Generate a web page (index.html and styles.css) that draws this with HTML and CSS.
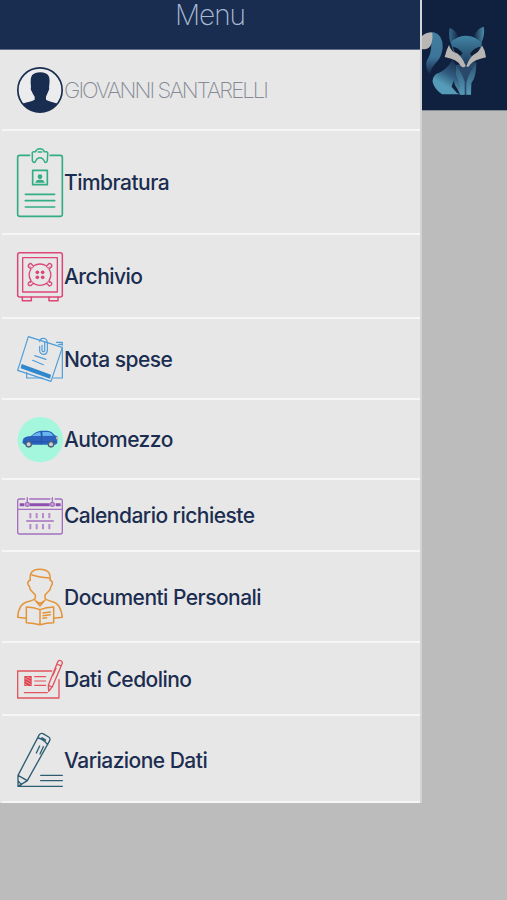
FILE: index.html
```
<!DOCTYPE html>
<html lang="it">
<head>
<meta charset="utf-8">
<title>Menu</title>
<link rel="stylesheet" href="styles.css">
</head>
<body>
<div class="app">
<aside class="drawer">
<header class="drawer-head"><h1>Menu</h1></header>
<nav>
<a class="row r-user"><svg width="48" height="79" viewBox="48 150 144 237"><defs><clipPath id="disc"><circle cx="120" cy="270" r="66"/></clipPath></defs><circle cx="120" cy="270" r="66.500" fill="#ececee" stroke="#182d4f" stroke-width="5"/><path clip-path="url(#disc)" fill="#182d4f" d="M93 262Q90 234 96 226Q104 217 121 217Q139 217 146 228Q151 236 147 262Q149 267 145 274Q140 286 138 290V299Q145 304 164 308L190 318V340H50V318L76 308Q97 304 104 299V290Q99 284 95 274Q91 268 93 262Z"/></svg><span class="user">GIOVANNI SANTARELLI</span></a>
<a class="row r-timb"><svg class="green" width="48" height="102" viewBox="48 -12 144 306" stroke-width="5"><path d="M89 61H59Q53 61 53 67V238Q53 244 59 244H181Q187 244 187 238V67Q187 61 181 61H150"/><path d="M97 58Q95 51 101 50H107Q109 41 120 41Q130 41 133 50H139Q145 51 143 58L142 77Q141 83 135 82Q129 68 120 68Q110 68 105 82Q98 83 97 77Z" stroke-width="4.500"/><path d="M115 51H125"/><path d="M98 106H142V149H98ZM76 178H164M76 197H164M76 216H164"/><g fill="#33ad83" stroke="none"><circle cx="120" cy="125" r="7"/><path d="M106 143Q108 133 120 134Q132 133 134 143Z"/></g></svg><span>Timbratura</span></a>
<a class="row r-arch"><svg class="pink" width="48" height="82" viewBox="48 -15 144 246" stroke-width="4.500"><rect x="53" y="38" width="134" height="133" rx="6"/><rect x="68" y="53" width="104" height="103" stroke-width="4"/><path d="M67 172V182H94V172M147 172V182H174V172"/><path stroke-width="4" d="M100 78Q120 66 140 78L148 70Q157 72 155 80L147 87Q158 104 147 122L155 129Q157 136 148 138L140 130Q120 142 100 130L92 137Q83 137 85 129L93 122Q82 104 93 87L85 80Q84 72 92 70Z"/><path stroke-width="3" d="M91 80L96 85L101 79M149 80L144 85L139 79M91 128L96 124L101 130M149 128L144 124L139 130"/><g fill="#dc4777" stroke="none"><circle cx="112" cy="97" r="5.500"/><circle cx="128" cy="97" r="5.500"/><circle cx="112" cy="112" r="5.500"/><circle cx="128" cy="112" r="5.500"/></g></svg><span>Archivio</span></a>
<a class="row r-nota"><svg class="blue" width="48" height="79" viewBox="48 -3 144 237" stroke-width="3.500"><path d="M169 67H187V76M187 86V174H160M80 158V174H128M176 73H187"/><path d="M85 50L187 82L153 184L53 151Z"/><path fill="#3187cb" stroke="none" d="M65 132L153 164L150 176L62 145Z"/><path d="M119 65Q120 54 131 55Q141 56 142 68V92Q141 103 131 103Q119 101 119 92V79M126 76V91Q128 98 134 93V66M104 107L138 118M98 121L130 134"/></svg><span>Nota spese</span></a>
<a class="row r-auto"><svg width="48" height="78" viewBox="48 0 144 234"><circle cx="121" cy="119" r="68" fill="#a4f7dc"/><path fill="#2b62bd" d="M69 119Q71 111 86 109L93 108Q107 93 124 92H142Q156 93 164 106L172 109V130L166 134H74L67 128Z"/><path fill="#69b7ee" d="M95 108Q108 97 121 96L123 108ZM127 96H142Q154 97 160 107L128 108Z"/><path fill="none" stroke="#1d4e9f" stroke-width="2" d="M124 94V132M74 125H169"/><path fill="#e9a889" d="M168 110H173V118H168Z"/><g fill="#c9d2d5" stroke="#4c6075" stroke-width="4"><circle cx="86" cy="133" r="8"/><circle cx="153" cy="133" r="8"/></g></svg><span>Automezzo</span></a>
<a class="row r-cal"><svg class="purple" width="48" height="70" viewBox="48 0 144 210" stroke-width="4"><path d="M74 57H59Q53 57 53 63V156Q53 162 59 162H181Q187 162 187 156V63Q187 57 181 57H165M89 57H150M53 88H187"/><path stroke="#8f50b0" stroke-width="9" stroke-linecap="butt" d="M59 74H73M90 74H149M167 74H182"/><path d="M82 53V67M157 53V67"/><circle fill="#c9a5d8" cx="82" cy="73" r="6"/><circle fill="#c9a5d8" cx="157" cy="73" r="6"/><path d="M80 123H160"/><path stroke-width="6" stroke-linecap="butt" stroke="#b78bcb" d="M91 99V115M110 99V115M129 99V115M148 99V115M91 132V148M110 132V148M129 132V148M148 132V148"/></svg><span>Calendario richieste</span></a>
<a class="row r-doc"><svg class="orange" width="48" height="89" viewBox="48 -9 144 267" stroke-width="4.500"><path d="M91 76Q86 43 119 43Q155 43 150 76M96 60Q118 67 149 69M91 75Q81 79 84 89Q88 91 91 104L106 120V129Q103 136 83 140Q56 145 53 187L78 190M150 75Q160 79 156 89Q152 94 150 104L135 120V129Q138 136 158 140Q182 145 187 187L161 190"/><path d="M105 135L120 153L135 135M110 140L120 145L131 139"/><path d="M79 156Q101 157 120 164Q139 157 161 156V203Q140 203 120 209Q101 204 79 203ZM120 164V209M129 174L151 171M129 182L151 179M129 190L140 188"/></svg><span>Documenti Personali</span></a>
<a class="row r-ced"><svg class="red" width="48" height="71" viewBox="48 0 144 213" stroke-width="4"><path d="M155 84H53V165H177V110"/><path d="M174 55Q178 50 184 54Q189 57 186 63L157 131L146 145L145 127ZM170 63L181 68M145 127L157 132M158 98L168 76"/><path stroke-width="3.500" d="M104 101H137M104 114H137M104 127H137M73 149H142"/><path fill="#e03f4b" stroke="none" d="M73 99H95V129H73Z"/><path stroke="#f0c9cc" stroke-width="2" d="M76 106L91 115M78 116L92 124M81 102L91 106M76 124L82 127"/></svg><span>Dati Cedolino</span></a>
<a class="row r-var"><svg class="teal" width="48" height="85" viewBox="48 -6 144 255" stroke-width="4"><path d="M54 172L118 50Q122 44 129 47L146 57Q152 61 149 68L82 188L54 205ZM54 172L82 188M54 188L64 200L54 205M115 60Q129 62 143 80M109 105L119 84M120 108L130 86M122 172H187M122 188H187M54 205H187"/><path d="M126 60L136 66" stroke-width="5"/></svg><span>Variazione Dati</span></a>
</nav>
</aside>
<main class="page">
<div class="brand"><svg width="85" height="110" viewBox="66 0 255 330"><defs><linearGradient id="tail" x1="0" y1="0" x2="0" y2="1"><stop offset="0" stop-color="#437f9f"/><stop offset=".6" stop-color="#3b7498"/><stop offset="1" stop-color="#18294b"/></linearGradient><linearGradient id="head" x1="0" y1="0" x2="0" y2="1"><stop offset="0" stop-color="#4385a6"/><stop offset="1" stop-color="#1e3a5b"/></linearGradient><linearGradient id="torso" x1=".8" y1="0" x2=".3" y2="1"><stop offset="0" stop-color="#182a4a"/><stop offset=".45" stop-color="#315d80"/><stop offset=".75" stop-color="#559bb7"/></linearGradient><linearGradient id="leg" x1="0" y1="0" x2="0" y2="1"><stop offset="0" stop-color="#2c5273"/><stop offset="1" stop-color="#559bb7"/></linearGradient><linearGradient id="earl"><stop offset="0" stop-color="#376d8d"/><stop offset="1" stop-color="#172a49"/></linearGradient><linearGradient id="earr"><stop offset="0" stop-color="#172a49"/><stop offset="1" stop-color="#4c8eaa"/></linearGradient></defs>
<path fill="url(#tail)" d="M66 108Q83 94 101 97Q129 104 128 143Q126 170 108 188Q93 204 89 222Q75 205 80 183Q94 163 94 132Z"/><path fill="#b9b7b5" d="M66 108Q80 96 97 98Q99 123 91 138Q81 151 66 147Z"/>
<path fill="url(#torso)" d="M158 179Q169 200 181 205L188 283H126Q105 269 99 250Q94 235 108 222Q139 211 158 179Z"/><path fill="#12213e" d="M163 240Q160 252 172 266L180 283L171 279L155 260Q157 250 163 240Z"/>
<path fill="#29486a" d="M168 195L229 186Q229 230 214 250L212 284H182Q181 251 168 224Z"/><path fill="url(#leg)" d="M168 195Q184 215 194 245V284H180Q181 253 168 224ZM229 190Q207 215 199 250V284H213L214 250Q229 230 229 190Z"/>
<path fill="url(#earl)" d="M149 84Q166 89 174 109L151 128Q145 104 149 84Z"/><path fill="url(#earr)" d="M251 80Q234 83 222 107L245 127Q256 101 251 80Z"/><path fill="url(#head)" d="M152 127Q172 106 198 107Q226 107 246 128L239 155L199 196L159 153Z"/><path fill="#101d37" d="M158 140Q175 142 188 160L180 168L166 160ZM241 140Q222 143 210 161L215 168L233 161Z"/>
<path fill="#b8b6b4" d="M147 135Q153 156 171 160Q186 170 197 197Q191 206 182 197Q172 178 134 171Q139 149 147 135ZM246 136Q239 155 223 163Q208 173 199 199Q206 204 211 193Q222 180 258 172Q255 150 246 136Z"/></svg></div>
</main>
</div>
</body>
</html>
```
FILE: styles.css
```
* { box-sizing: border-box; }
body { margin: 0; background: #bcbcbc; font-family: Inter, "Liberation Sans", sans-serif; }
.app { display: flex; align-items: flex-start; height: 900px; overflow: hidden; }
.drawer { width: 422px; background: #e7e7e7; border-right: 2px solid #d2d3d5; }
.drawer-head { height: 50px; background: #182d4f; border-bottom: 1px solid #60708a; display: flex; justify-content: center; }
.drawer-head h1 { margin: 0; font-size: 28px; line-height: 30px; font-weight: 200; color: #a9b9d3; letter-spacing: -1px; }
.row { display: flex; align-items: center; margin-left: 2px; padding-left: 14px; border-bottom: 2px solid #f6f6f6; color: #1b2d50; font-size: 21px; font-weight: 500; letter-spacing: -0.53px; white-space: nowrap; }
.row svg { flex: none; fill: none; stroke-linecap: round; stroke-linejoin: round; }
.row span { padding-top: 1px; }
.row .user { padding-top: 0; font-size: 22px; font-weight: 200; color: #858a95; letter-spacing: -1.9px; }
.r-user { height: 81px; }
.r-timb { height: 104px; }
.r-arch { height: 84px; }
.r-nota { height: 81px; }
.r-auto { height: 80px; }
.r-cal { height: 72px; }
.r-doc { height: 91px; }
.r-ced { height: 73px; }
.r-var { height: 87px; }
.row.r-var span { padding-top: 3px; }
.green { stroke: #33ad83; }
.pink { stroke: #dc4777; }
.blue { stroke: #4c9cd9; }
.purple { stroke: #a570bf; }
.orange { stroke: #e39439; }
.red { stroke: #e4545e; }
.teal { stroke: #2d5d73; }
.page { flex: 1; }
.brand { height: 111px; background: #10213f; border-bottom: 1px solid #858b95; }
.brand svg { display: block; }
```
